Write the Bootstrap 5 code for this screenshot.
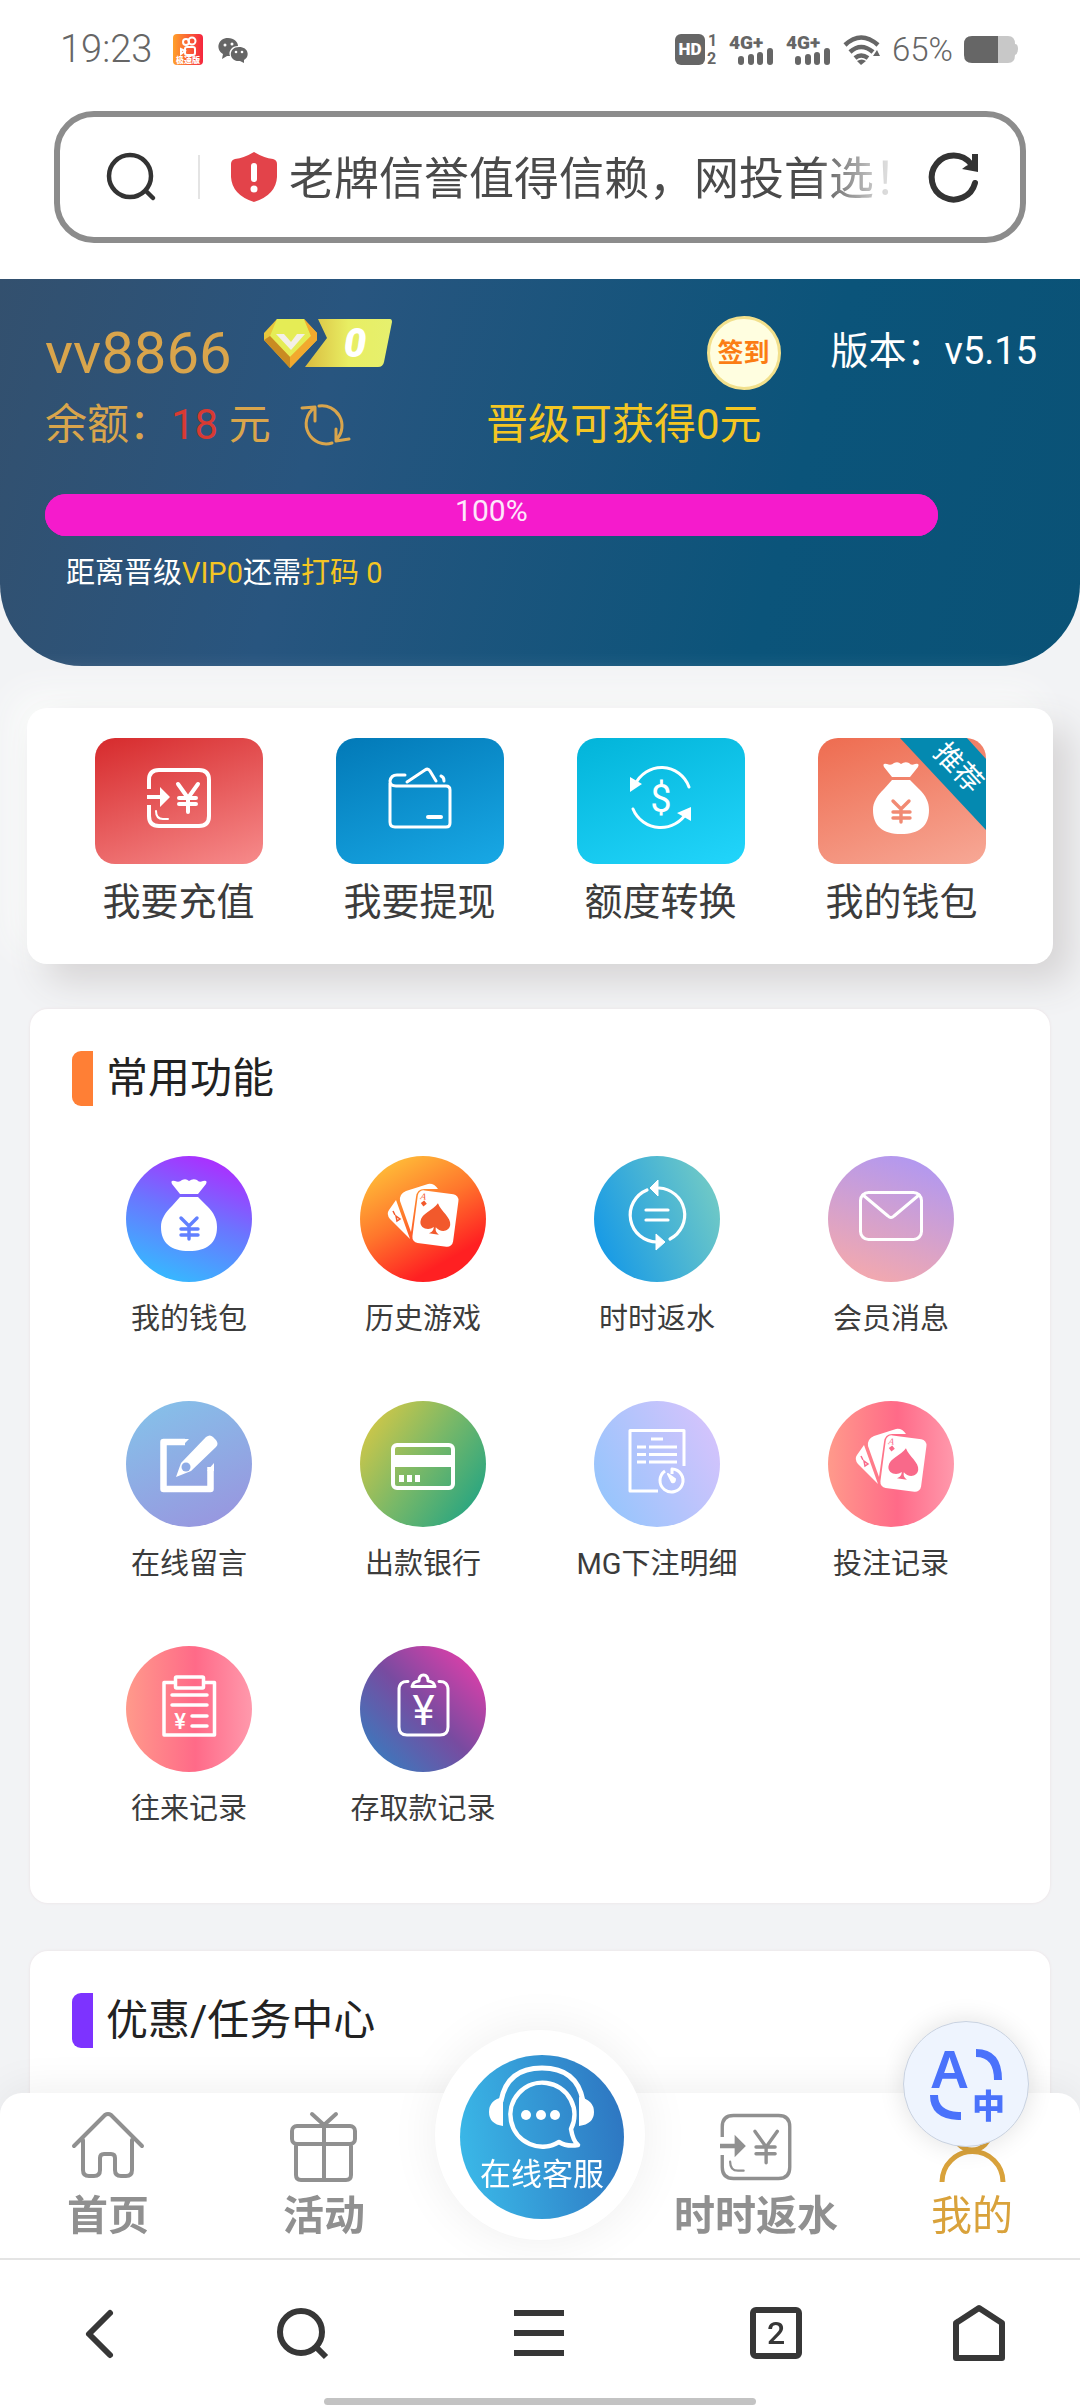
<!DOCTYPE html>
<html lang="zh-CN">
<head>
<meta charset="utf-8">
<meta name="viewport" content="width=device-width, initial-scale=1">
<title>我的</title>
<link rel="stylesheet" href="https://cdn.jsdelivr.net/npm/bootstrap@5.3.0/dist/css/bootstrap.min.css">
<style>
  body { font-family: Roboto, "Noto Sans CJK SC", sans-serif; background: #f2f3f5; color: #3c3c3c; }
  svg { display: block; flex: none; overflow: visible; }
  button { border: 0; background: none; padding: 0; color: inherit; }
  a { color: inherit; text-decoration: none; }
  .line-art { fill: none; stroke: currentColor; stroke-linecap: round; stroke-linejoin: round; }

  /* device status bar and address bar */
  .phone-top { background: #fff; padding-bottom: 36px; }
  .status-row { height: 111px; padding: 0 62px 12px 60px; color: #666; gap: 11px; }
  .clock { font-size: 38px; font-weight: 300; margin-right: 10px; }
  .charge { font-size: 33px; font-weight: 300; line-height: 40px; }
  .address { height: 132px; margin: 0 54px; padding: 0 42px 0 47px; border: 6px solid #8c8c8c; border-radius: 40px; color: #333; }
  .address-rule { width: 2px; height: 44px; background: #e4e4e4; margin: 0 31px 0 42px; }
  .address-text { flex: 1; min-width: 0; border: 0; outline: 0; background: none; padding: 5px 0 0; margin: 0 32px 0 12px; font-size: 45px; line-height: 60px; color: #4a4a4a;
    -webkit-mask-image: linear-gradient(90deg, #000 86%, rgba(0,0,0,.2) 98%); mask-image: linear-gradient(90deg, #000 86%, rgba(0,0,0,.2) 98%); }

  /* member header */
  .member { padding: 37px 43px 73px 45px; border-radius: 0 0 82px 82px; color: #fff;
    background: linear-gradient(105deg, #33506e 0%, #28557f 30%, #0b547a 72%, #0a5276 100%); }
  .member-name { font-size: 58px; line-height: 66px; color: #d9a54c; }
  .level { margin-left: 32px; }
  .sign-in { width: 74px; height: 74px; border: 3px solid #f2e08c; border-radius: 50%; background: #fffee0; color: #fb7d14; font-size: 26px; font-weight: 700; }
  .version { font-size: 38px; line-height: 66px; margin-left: 50px; padding-bottom: 4px; }
  .balance-row { font-size: 42px; line-height: 60px; margin-top: 5px; color: #d9a54c; }
  .balance { flex: 0 0 441px; }
  .balance svg { margin-left: 30px; }
  .amount { color: #d83a32; }
  .gold { color: #f4c623; }
  .level-bar { width: 90%; height: 42px; margin-top: 39px; border-radius: 21px; background: #f51bcc; overflow: visible; }
  .level-bar .progress-bar { background: #f51bcc; border-radius: 21px; justify-content: flex-start; font-size: 30px; line-height: 34px; color: #fde8fb; overflow: visible; }
  .level-note { font-size: 29px; line-height: 40px; margin: 17px 0 0 21px; }

  /* shortcut tiles */
  .quick { margin: 42px 27px 0; padding: 30px 31px 36px; background: #fff; border-radius: 20px; box-shadow: 18px 18px 36px #d6d4d5, -14px -14px 36px #fbfcfb; }
  .tile { width: 168px; height: 126px; padding-bottom: 6px; border-radius: 20px; color: #fff; }
  .tile-label { font-size: 38px; line-height: 50px; margin-top: 13px; margin-bottom: 1px; }
  .bg-recharge { background: linear-gradient(160deg, #d62a2c, #f78b8b); }
  .bg-withdraw { background: linear-gradient(160deg, #0279b7, #18a8e5); }
  .bg-convert { background: linear-gradient(160deg, #02b4d9, #22d5fb); }
  .bg-purse { background: linear-gradient(160deg, #ee6c50, #f7a896); --ink: #f18a73; }

  /* sections */
  .panel { margin: 45px 30px 0; padding: 42px 42px 12px; background: #fff; border-radius: 18px; box-shadow: 0 0 3px #eadfe2; }
  .panel-next { margin-top: 48px; }
  .panel-title { font-size: 42px; line-height: 55px; font-weight: 400; color: #222; margin: 0; gap: 13px; }
  .title-mark { width: 21px; height: 55px; border-radius: 9px 0 0 9px; background: #ff7f35; }
  .title-mark.violet { background: #7d33ff; }
  .features { margin-top: 50px; }
  .feature { padding-bottom: 62px; font-size: 29px; line-height: 40px; white-space: nowrap; }
  .disc { width: 126px; height: 126px; margin-bottom: 17px; border-radius: 50%; color: #fff; }
  .d-purse { background: linear-gradient(20deg, #2ac8ff, #6a76ff 52%, #a832ff 88%); --ink: #6280ff; }
  .d-history { background: linear-gradient(150deg, #ffd23c, #ff762c 45%, #ff2022 78%); --ink: #f2592c; }
  .d-rebate { background: linear-gradient(68deg, #0c94ea, #7bcfc2); }
  .d-mail { background: linear-gradient(200deg, #b298f0 10%, #f4a9ad 92%); }
  .d-note { background: linear-gradient(155deg, #84c4ea, #9a92de); --ink: #8fabe6; }
  .d-bank { background: linear-gradient(125deg, #e6cb40, #78b868 50%, #12a088); }
  .d-detail { background: linear-gradient(62deg, #8ec5fc, #dcc3fc); }
  .d-bets { background: linear-gradient(90deg, #ff9a8b, #ff6a88 55%, #ff99ac); --ink: #f9698a; }
  .d-funds { background: linear-gradient(225deg, #f63cac, #784ba0 50%, #2b86c5); }

  /* bottom bars */
  .tabs-bar { background: #fff; border-radius: 22px 22px 0 0; box-shadow: 0 -6px 40px rgba(0,0,0,.06); }
  .tab-item { flex: 1 1 0; padding: 19px 0 18px; color: #909090; font-size: 41px; line-height: 48px; font-weight: 700; white-space: nowrap; }
  .tab-item svg { height: 70px; margin-bottom: 10px; }
  .tab-item.current { color: #d9a23b; font-weight: 400; }
  .service { top: -63px; left: 50%; width: 210px; height: 210px; margin-left: -105px; padding: 4px 0 0 4px; border-radius: 50%; background: #fff; box-shadow: 0 0 50px rgba(0,0,0,.07); }
  .service-face { width: 164px; height: 164px; border-radius: 50%; color: #fff; font-size: 31px; font-weight: 400; line-height: 36px; background: linear-gradient(80deg, #3bbcea, #2d72bf); }
  .translate-btn { top: -72px; right: 51px; width: 126px; height: 126px; border: 1px solid #c9d2e0; border-radius: 50%; background: #eef4fe; color: #4a72fb; box-shadow: 0 0 26px rgba(0,0,0,.12); }
  .browser-bar { height: 150px; padding: 0 75px 2px 73px; background: #fff; border-top: 2px solid #e4e4e4; color: #373737; }
  .browser-bar .narrow { width: 52px; }
  .browser-bar .wide { width: 120px; }
  .page-count { width: 52px; height: 52px; border: 6px solid #373737; border-radius: 6px; font-size: 32px; line-height: 40px; font-weight: 500; }
  .gesture { left: 30%; right: 30%; bottom: 3px; height: 7px; border-radius: 4px; background: #c3c3c3; }
  .main-space { padding-bottom: 150px; }
</style>
<script src="https://cdn.jsdelivr.net/npm/bootstrap@5.3.0/dist/js/bootstrap.bundle.min.js"></script>
</head>
<body>
<svg width="0" height="0" class="position-absolute" aria-hidden="true">
  <symbol id="bag" viewBox="0 0 57 73">
    <path fill="currentColor" d="M19 15 11 5Q9 1 14 2q4 2 7-1 4-2 7 1 4-3 8-1 2 3 6 1 5-1 3 3l-8 10zM19 18h18l9 9c7 7 10 13 10 21 0 16-10 24-28 24S0 64 0 48c0-8 4-14 11-21z"/>
    <path fill="none" stroke="var(--ink)" stroke-width="3.4" stroke-linecap="round" stroke-linejoin="round" d="m20 39 8 8 8-8M28 47v13M20 50h17M20 56h17"/>
  </symbol>
  <symbol id="pay-in" viewBox="0 0 64 60">
    <g class="line-art"><path stroke-linecap="butt" d="M2 21V12Q2 2 12 2H52Q62 2 62 12V48Q62 58 52 58H12Q2 58 2 48V37"/><path stroke-width="2" d="M9 43q0 8 7 8h5"/><path d="m31 16 10 14 10-14M41 30v14M32 30h17M32 36h17"/></g>
    <path fill="currentColor" d="M0 27h13v-8l10 10-10 10v-8H0z"/>
  </symbol>
  <symbol id="cards" viewBox="0 0 126 126">
    <path fill="currentColor" d="M36 44 50 83 30 63Q26 58 29 54zM40 45Q39 38 46 35L68 28Q74 27 78 33H66Q57 32 56 41L51 76z"/>
    <g transform="rotate(7.500 75 62)"><rect x="55" y="36" width="41" height="53" rx="6" fill="currentColor"/>
      <path fill="var(--ink)" d="M76 47c4 8 15 12 15 20 0 7-9 9-14 4 0 4 1 5 4 7H71c3-2 4-3 4-7-5 5-14 3-14-4 0-8 11-12 15-20z"/>
      <path fill="var(--ink)" d="m62 46 3 3-3 3-3-3z"/><text x="58" y="45" font-size="9" font-style="italic" font-family="Liberation Serif" fill="var(--ink)">A</text></g>
    <g fill="none" stroke="var(--ink)" stroke-width="1.500"><path d="m33 55 2 4M36 60l4 3-3 2z"/></g>
  </symbol>
  <symbol id="signal" viewBox="0 0 46 31">
    <text x="0" y="15" font-size="19" font-weight="900" font-family="Roboto" fill="currentColor">4G+</text>
    <g fill="currentColor"><rect x="9" y="22" width="6" height="9" rx="3"/><rect x="19" y="20" width="6" height="11" rx="3"/><rect x="28" y="18" width="6" height="13" rx="3"/><rect x="38" y="14" width="6" height="17" rx="3"/></g>
  </symbol>
</svg>

<div class="min-vh-100 d-flex flex-column main-space">
  <header class="phone-top">
    <div class="status-row d-flex align-items-center">
      <time class="clock">19:23</time>
      <svg width="30" height="31" viewBox="0 0 30 31"><defs><linearGradient id="ksg"><stop stop-color="#ffa02a"/><stop offset="1" stop-color="#f5253f"/></linearGradient></defs>
        <rect width="30" height="31" rx="4" fill="url(#ksg)"/><g fill="none" stroke="#fff" stroke-width="2"><circle cx="13" cy="8" r="3"/><circle cx="19" cy="7" r="3.500"/><rect x="12" y="13" width="10" height="8" rx="2"/><path d="m12 17-4-2v5z"/></g>
        <text x="15" y="29" text-anchor="middle" font-size="8" font-weight="900" fill="#fff">极速版</text></svg>
      <svg width="32" height="26" viewBox="0 0 32 26" class="ms-1"><path fill="#666" d="M10 1c6 0 10 4 10 8-6 0-10 5-8 10H9l-5 3 1-5C-3 12 0 1 10 1z"/><path fill="#666" d="M21 10c10 0 11 10 5 13v3l-4-2c-12 1-12-14-1-14z"/><g fill="#fff"><circle cx="7" cy="8" r="1.500"/><circle cx="14" cy="7" r="1.500"/><circle cx="18" cy="15" r="1.300"/><circle cx="24" cy="15" r="1.300"/></g></svg>
      <svg class="ms-auto" width="43" height="31" viewBox="0 0 43 31"><rect width="30" height="31" rx="6" fill="#666"/><text x="15" y="21" text-anchor="middle" font-size="17" font-weight="900" fill="#fff">HD</text><g fill="#666" font-size="16" font-weight="700"><text x="33" y="12">1</text><text x="32" y="30">2</text></g></svg>
      <svg width="46" height="31"><use href="#signal"/></svg>
      <svg width="46" height="31"><use href="#signal"/></svg>
      <svg width="38" height="30" viewBox="0 0 38 30"><g fill="none" stroke="#666" stroke-width="4.500"><path d="M2 10Q18-5 35 10M7 17q11-10 23 0M12 23q6-5 13 0"/></g><path fill="#666" d="m14 26 4 4 5-4q-4-3-9 0zM30 21l4-6 3 6z"/></svg>
      <span class="charge">65%</span>
      <svg width="54" height="27" viewBox="0 0 54 27"><path fill="#c8c8c8" d="M8 0H44q7 0 7 8 3 0 3 5t-3 6q0 8-7 8H8z"/><path fill="#666" d="M8 0H34V27H8Q0 27 0 19V8Q0 0 8 0z"/></svg>
    </div>
    <div class="address d-flex align-items-center">
      <svg width="49" height="48" viewBox="0 0 49 48" stroke-width="4.500" class="line-art"><circle cx="23" cy="23" r="21"/><path d="m39 38 7 7"/></svg>
      <span class="address-rule"></span>
      <svg width="46" height="50" viewBox="0 0 46 50"><path fill="#e3434a" d="M23 0Q33 6 42 7q4 1 4 5V25Q45 43 23 50 1 43 0 25V12Q0 8 4 7 13 6 23 0z"/><path stroke="#fff" stroke-width="6" stroke-linecap="round" d="M23 14v13"/><circle cx="23" cy="37" r="3.500" fill="#fff"/></svg>
      <input class="address-text" type="text" aria-label="地址栏" value="老牌信誉值得信赖，网投首选！">
      <button type="button" aria-label="刷新"><svg width="49" height="50" viewBox="0 0 49 50"><path fill="none" stroke="#333" stroke-width="6" stroke-linecap="round" d="M46 31A22 22 0 1 1 42 12"/><path fill="#333" d="M49 2V20L33 17l4-3 6-3V2z"/></svg></button>
    </div>
  </header>

  <section class="member">
    <div class="d-flex align-items-center">
      <span class="member-name">vv8866</span>
      <svg class="level align-self-start" width="128" height="54" viewBox="0 0 128 54"><defs><linearGradient id="lvA"><stop stop-color="#d9bb3f"/><stop offset=".5" stop-color="#e8ee63"/><stop offset="1" stop-color="#e6f06e"/></linearGradient></defs>
        <path fill="url(#lvA)" d="M54 3H126q2 0 2 3L120 46q-1 5-6 5H41L63 22z"/>
        <path fill="#e9c63b" d="M13 3H40L53 17v7L26 52 0 24v-7z"/><path fill="#e5ec55" d="M13 3H40L47 20 26 41 6 20z"/><path fill="#f2a92e" d="M40 3 53 17v7L47 20zM26 41 47 20l6 4L26 52z"/><path fill="#c98b22" d="M0 24 6 20 26 41V52z"/>
        <path fill="#f4efe6" d="M12 18h8l7 8 6-8h8L27 34z"/><text x="91" y="41" text-anchor="middle" font-size="40" font-weight="900" font-style="italic" fill="#fff">0</text></svg>
      <button type="button" class="sign-in ms-auto">签到</button>
      <span class="version">版本：v5.15</span>
    </div>
    <div class="balance-row d-flex align-items-center">
      <div class="balance d-flex align-items-center">
        <span>余额：<span class="amount">18</span> 元</span>
        <button type="button" aria-label="刷新余额"><svg width="49" height="44" viewBox="0 0 49 44" class="line-art" stroke-width="3"><path d="M18 3A20 20 0 0 1 36 36M31 40A20 20 0 0 1 13 5M1 5 14 4V18M35 26v12l13-2"/></svg></button>
      </div>
      <span class="gold">晋级可获得0元</span>
    </div>
    <div class="progress level-bar" role="progressbar" aria-label="晋级进度" aria-valuenow="100" aria-valuemin="0" aria-valuemax="100"><div class="progress-bar" style="width:100%">100%</div></div>
    <p class="level-note">距离晋级<span class="gold">VIP0</span>还需<span class="gold">打码 0</span></p>
  </section>

  <nav class="quick row row-cols-4 g-0 text-center">
    <a href="#" class="col d-flex flex-column align-items-center"><span class="tile bg-recharge d-flex align-items-center justify-content-center"><svg width="64" height="60" stroke-width="4"><use href="#pay-in"/></svg></span><span class="tile-label">我要充值</span></a>
    <a href="#" class="col d-flex flex-column align-items-center"><span class="tile bg-withdraw d-flex align-items-center justify-content-center"><svg width="64" height="62" viewBox="0 0 64 62" class="line-art" stroke-width="3"><path d="M2 16V55q0 5 5 5H58q4 0 4-4V23q0-4-4-4H8Q2 19 2 14 3 8 9 8h8M19 15 37 3q3-2 5 1l6 10M53 9q3 1 3 5"/><path stroke-width="4" d="M40 50h13"/></svg></span><span class="tile-label">我要提现</span></a>
    <a href="#" class="col d-flex flex-column align-items-center"><span class="tile bg-convert d-flex align-items-center justify-content-center"><svg width="62" height="64" viewBox="0 0 62 64"><path class="line-art" stroke-width="3" d="M5 19A29 29 0 0 1 59 21M3 43A30 30 0 0 0 57 46"/><path fill="#fff" d="M0 11 12 18 0 26zM61 41V55L47 47z"/><text x="31" y="46" text-anchor="middle" font-size="38" fill="#fff">$</text></svg></span><span class="tile-label">额度转换</span></a>
    <a href="#" class="col d-flex flex-column align-items-center"><span class="tile bg-purse d-flex align-items-center justify-content-center position-relative overflow-hidden"><svg width="57" height="73"><use href="#bag"/></svg>
      <svg class="position-absolute top-0 end-0" width="86" height="92" viewBox="0 0 86 92"><path fill="#0489b0" d="M0 0H67L86 21V92z"/><text transform="translate(58 30) rotate(47)" text-anchor="middle" y="9" font-size="28" fill="#fff">推荐</text></svg></span><span class="tile-label">我的钱包</span></a>
  </nav>

  <section class="panel">
    <h2 class="panel-title d-flex"><span class="title-mark"></span>常用功能</h2>
    <div class="features row row-cols-4 g-0">
      <a href="#" class="feature col d-flex flex-column align-items-center"><span class="disc d-purse"><svg width="126" height="126"><use href="#bag" x="35" y="23" width="57" height="73"/></svg></span>我的钱包</a>
      <a href="#" class="feature col d-flex flex-column align-items-center"><span class="disc d-history"><svg width="126" height="126"><use href="#cards"/></svg></span>历史游戏</a>
      <a href="#" class="feature col d-flex flex-column align-items-center"><span class="disc d-rebate"><svg width="126" height="126"><path class="line-art" stroke-width="3.200" d="M53 34A27 27 0 0 0 63 86M76 83A27 27 0 0 0 65 32M52 54h22M52 64h22"/><path fill="#fff" stroke="#fff" stroke-linejoin="round" d="M64 24V40L56 32zM62 78V94L71 86z"/></svg></span>时时返水</a>
      <a href="#" class="feature col d-flex flex-column align-items-center"><span class="disc d-mail"><svg width="126" height="126" class="line-art" stroke-width="3"><rect x="32.500" y="36.500" width="61" height="47" rx="8"/><path d="M35 39 60 60q3 3 6 0L91 39"/></svg></span>会员消息</a>
      <a href="#" class="feature col d-flex flex-column align-items-center"><span class="disc d-note"><svg width="126" height="126"><path fill="none" stroke="#fff" stroke-width="6.500" stroke-linejoin="round" d="M59 41H37.500V88H84.500V66"/><path fill="#fff" d="M56 38h7l-6 6h-4zM81 70l7-8v8zM50 76l5-14L80 36q4-3 7 0l3 3q3 4 0 7L65 70z"/><circle cx="60" cy="66" r="4.500" fill="var(--ink)"/></svg></span>在线留言</a>
      <a href="#" class="feature col d-flex flex-column align-items-center"><span class="disc d-bank"><svg width="126" height="126"><rect x="33" y="44" width="60" height="43" rx="4" fill="none" stroke="#fff" stroke-width="4"/><path fill="#fff" d="M33 54h60v12H33zM39 74h5v7h-5zM47 74h5v7h-5zM55 74h5v7h-5z"/></svg></span>出款银行</a>
      <a href="#" class="feature col d-flex flex-column align-items-center"><span class="disc d-detail"><svg width="126" height="126" fill="none" stroke="#fff" stroke-width="3" stroke-linejoin="round"><path d="M90 65V29.500H36V90H64M57 38h12M43 46h9M55 46h28M43 53.500h9M55 53.500h28M43 61h9M55 61h28"/><path d="M71 70A11.500 11.500 0 1 0 78 68v5"/><path fill="#fff" stroke-width="2" d="m74 73 7 5q0 4-3 3z"/></svg></span>MG下注明细</a>
      <a href="#" class="feature col d-flex flex-column align-items-center"><span class="disc d-bets"><svg width="126" height="126"><use href="#cards"/></svg></span>投注记录</a>
      <a href="#" class="feature col d-flex flex-column align-items-center"><span class="disc d-bets"><svg width="126" height="126"><g class="line-art" stroke-width="3.500"><path d="M48 36.500H38V89H88.500V36.500H78"/><rect x="49.500" y="31" width="28" height="11" rx="1"/><path d="M46 49h35M46 59h35M66 70h15M66 80h15"/></g><text x="54" y="83" text-anchor="middle" font-size="22" font-weight="500" fill="#fff">¥</text></svg></span>往来记录</a>
      <a href="#" class="feature col d-flex flex-column align-items-center"><span class="disc d-funds"><svg width="126" height="126"><path class="line-art" stroke-width="3" d="M48 35.500Q39 35 39 44V81q0 8 8 8H80q8 0 8-8V44q0-9-9-8.500M52 40.500q1-5 7-5.500 0-6 4.500-6T68 35q6 .5 7 5.500H52"/><text x="63.500" y="79" text-anchor="middle" font-size="42" fill="#fff">¥</text></svg></span>存取款记录</a>
    </div>
  </section>

  <section class="panel panel-next flex-grow-1">
    <h2 class="panel-title d-flex"><span class="title-mark violet"></span>优惠/任务中心</h2>
  </section>
</div>

<footer class="fixed-bottom">
  <nav class="tabs-bar d-flex position-relative">
    <a href="#" class="tab-item d-flex flex-column align-items-center"><svg width="72" viewBox="0 0 72 70" class="line-art" stroke-width="4"><path d="M2 34 33 3q3-2 6 0L70 34M11 28V58q0 6 6 6h5q6 0 6-6V46q0-4 4-4h7q4 0 4 4V58q0 6 6 6h5q6 0 6-6V28"/></svg>首页</a>
    <a href="#" class="tab-item d-flex flex-column align-items-center"><svg width="68" viewBox="0 0 68 70" class="line-art" stroke-width="4"><rect x="2" y="14" width="63" height="18" rx="5"/><path d="M6 34V63q0 5 5 5H56q5 0 5-5V34M34 14V68M34 13 22 2M34 13 46 2"/></svg>活动</a>
    <a href="#" class="tab-item" aria-label="在线客服"><span class="service position-absolute d-flex align-items-center justify-content-center"><span class="service-face d-flex flex-column align-items-center"><svg width="164" height="92" viewBox="0 0 164 92" style="height:92px"><path class="line-art" stroke-width="5" d="M41 46Q47 13 82 13t41 33"/><path fill="#fff" d="M43 42V71Q29 69 29 57T43 42zM119 42V71q15-2 15-14T119 42z"/><path class="line-art" stroke-width="4.500" d="M111 74q2 12 7 16-11 2-19-3A32 32 0 1 1 111 74z"/><g fill="#fff"><circle cx="66" cy="60" r="5"/><circle cx="81" cy="60" r="5"/><circle cx="95" cy="60" r="5"/></g></svg>在线客服</span></span></a>
    <a href="#" class="tab-item d-flex flex-column align-items-center"><svg width="72" stroke-width="3"><use href="#pay-in"/></svg>时时返水</a>
    <a href="#" class="tab-item current d-flex flex-column align-items-center"><svg width="72" viewBox="0 0 72 70" fill="none" stroke="currentColor" stroke-width="5"><circle cx="36" cy="20" r="18"/><path d="M6 70A30 30 0 0 1 67 70"/></svg>我的</a>
    <button type="button" class="translate-btn position-absolute" aria-label="翻译"><svg width="124" height="124"><text x="26" y="66" font-size="54" font-weight="700" font-family="Liberation Sans" fill="currentColor">A</text><text x="68" y="96" font-size="33" font-weight="900" font-family="Noto Sans CJK SC" fill="currentColor">中</text><path fill="none" stroke="currentColor" stroke-width="8" d="M72 31Q94 31 94 58M30 73Q30 94 57 94"/></svg></button>
  </nav>
  <div class="browser-bar d-flex align-items-center justify-content-between position-relative">
    <button type="button" class="narrow" aria-label="后退"><svg width="52" height="52" class="line-art" stroke-width="6"><path d="M37 6 16 27 37 48"/></svg></button>
    <button type="button" class="narrow" aria-label="搜索"><svg width="52" height="52" class="line-art" stroke-width="6"><circle cx="25" cy="25" r="21"/><path stroke-linecap="butt" d="m39 39 11 11"/></svg></button>
    <button type="button" class="wide d-flex justify-content-center" aria-label="菜单"><svg width="52" height="52" fill="none" stroke="currentColor" stroke-width="6"><path d="M1 6h50M1 26h50M1 46h50"/></svg></button>
    <button type="button" class="page-count">2</button>
    <button type="button" class="narrow" aria-label="主页"><svg width="52" height="56" class="line-art" stroke-width="6"><path d="M3 18 26 3 49 18V53H3z"/></svg></button>
    <span class="gesture position-absolute"></span>
  </div>
</footer>
</body>
</html>
